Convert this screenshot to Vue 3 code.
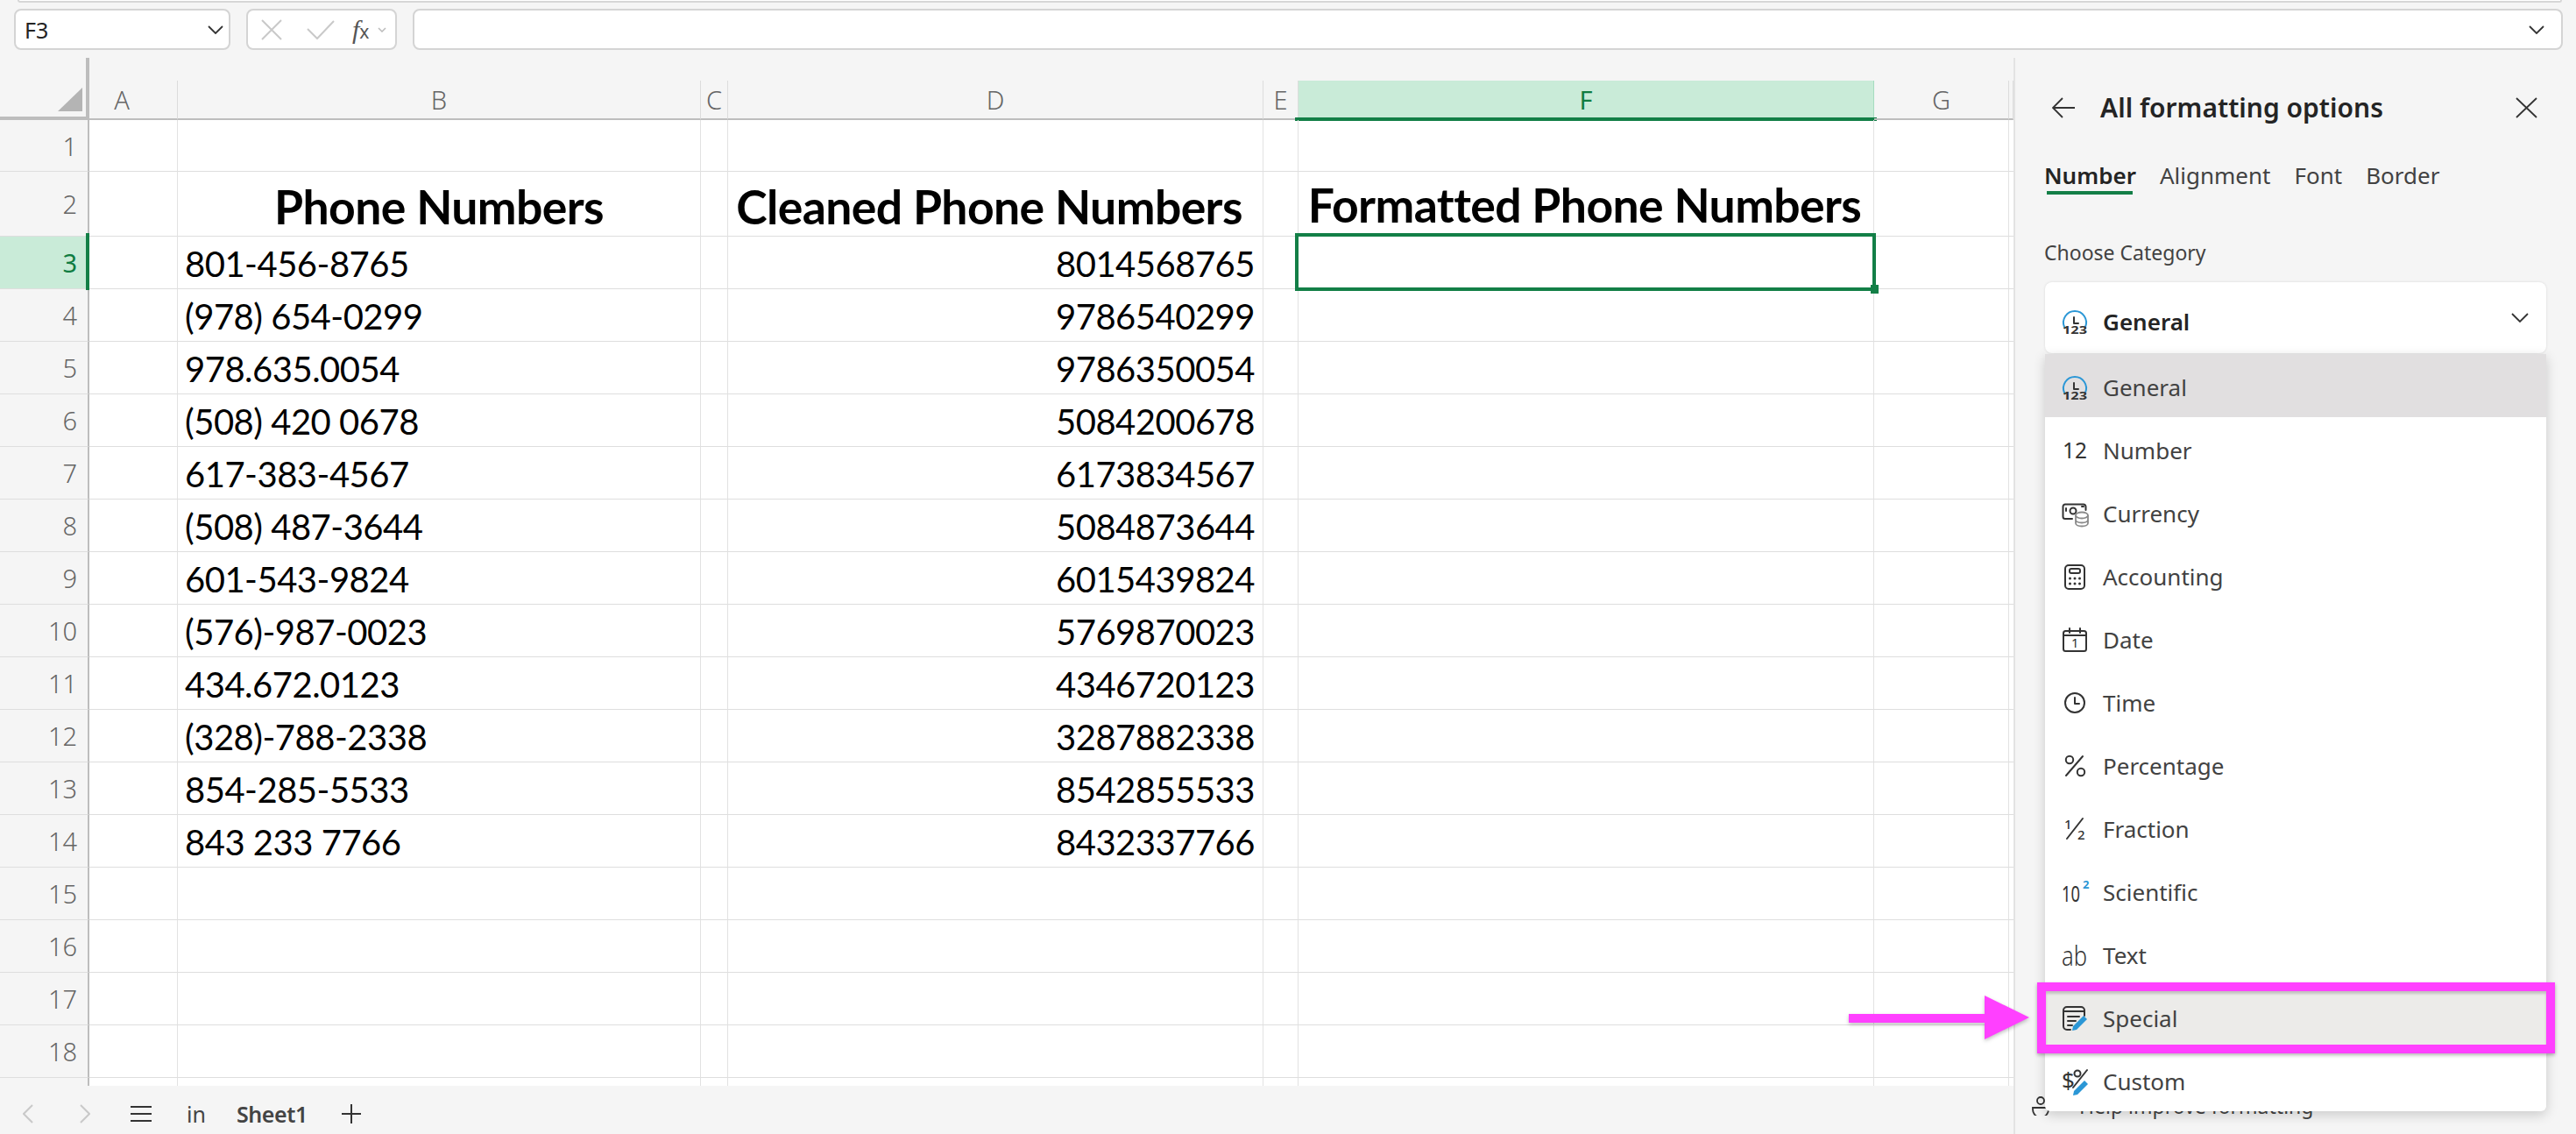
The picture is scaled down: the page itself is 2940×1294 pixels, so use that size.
<script setup>
const columns = [
  { id: 'A', cls: 'col-a' }, { id: 'B' }, { id: 'C' }, { id: 'D' }, { id: 'E' },
  { id: 'F', cls: 'col-sel' }, { id: 'G' }, { id: 'H', label: '' }
]
const dataCols = ['A', 'B', 'C', 'D', 'E', 'F', 'G', 'H']
const phones = [
  ['801-456-8765', '8014568765'], ['(978) 654-0299', '9786540299'], ['978.635.0054', '9786350054'],
  ['(508) 420 0678', '5084200678'], ['617-383-4567', '6173834567'], ['(508) 487-3644', '5084873644'],
  ['601-543-9824', '6015439824'], ['(576)-987-0023', '5769870023'], ['434.672.0123', '4346720123'],
  ['(328)-788-2338', '3287882338'], ['854-285-5533', '8542855533'], ['843 233 7766', '8432337766']
]
const rowNums = Array.from({ length: 19 }, (_, i) => i + 1)
function cellText(r, c) {
  if (r === 2) {
    if (c === 'B') return 'Phone Numbers'
    if (c === 'D') return 'Cleaned Phone Numbers'
    if (c === 'F') return 'Formatted Phone Numbers'
    return ''
  }
  const p = phones[r - 3]
  if (!p) return ''
  if (c === 'B') return p[0]
  if (c === 'D') return p[1]
  return ''
}
function cellClass(r, c) {
  return {
    head: r === 2 && cellText(r, c),
    'head-d': r === 2 && c === 'D',
    'head-f': r === 2 && c === 'F',
    right: r > 2 && c === 'D',
    selected: r === 3 && c === 'F'
  }
}
const tabs = ['Number', 'Alignment', 'Font', 'Border']
const items = ['General', 'Number', 'Currency', 'Accounting', 'Date', 'Time', 'Percentage', 'Fraction', 'Scientific', 'Text', 'Special', 'Custom']
</script>

<template>
  <div class="app">
    <div class="top-strip"></div>
    <div class="formula-bar">
      <div class="box name-box">
        <span>F3</span>
        <svg class="name-chev" width="18" height="10" viewBox="0 0 18 10"><path d="M1 1l8 8 8-8" /></svg>
      </div>
      <div class="box fx-box">
        <svg width="24" height="24" viewBox="0 0 24 24" class="fx-x"><path d="M1 1l22 22M23 1L1 23" /></svg>
        <svg width="32" height="22" viewBox="0 0 32 22" class="fx-check"><path d="M1 10l11 11L31 1" /></svg>
        <span class="fx-text"><i>f</i><i class="x">x</i></span>
        <svg width="10" height="6" viewBox="0 0 10 6" class="fx-chev"><path d="M1 1l4 4 4-4" /></svg>
      </div>
      <div class="box formula-input">
        <svg width="18" height="10" viewBox="0 0 18 10" class="name-chev"><path d="M1 1l8 8 8-8" /></svg>
      </div>
    </div>

    <div class="main">
      <section class="sheet">
        <div class="grid">
          <div class="corner"><span class="tri"></span></div>
          <div v-for="c in columns" :key="c.id" class="col-cell">
            <div class="col-inner" :class="c.cls">{{ c.label === '' ? '' : c.id }}<span v-if="c.id === 'F'" class="col-bar"></span></div>
          </div>
          <template v-for="r in rowNums" :key="r">
            <div class="row-head" :class="{ 'row-sel': r === 3 }">{{ r < 19 ? r : '' }}<span v-if="r === 3" class="row-bar"></span></div>
            <div v-for="c in dataCols" :key="c" class="cell" :class="cellClass(r, c)">
              {{ cellText(r, c) }}
              <span v-if="r === 3 && c === 'F'" class="sel-box"><span class="sel-handle"></span></span>
            </div>
          </template>
        </div>
        <div class="tabbar">
          <svg class="nav-l" width="12" height="22" viewBox="0 0 12 22"><path d="M11 1L1 11l10 10" /></svg>
          <svg class="nav-r" width="12" height="22" viewBox="0 0 12 22"><path d="M1 1l10 10L1 21" /></svg>
          <svg class="menu" width="24" height="20" viewBox="0 0 24 20"><path d="M0 2h24M0 10h24M0 18h24" /></svg>
          <span class="in">in</span>
          <span class="sheet-tab">Sheet1</span>
          <svg class="plus" width="22" height="22" viewBox="0 0 22 22"><path d="M11 0v22M0 11h22" /></svg>
        </div>
      </section>

      <aside class="panel">
        <header class="panel-head">
          <svg width="26" height="24" viewBox="0 0 26 24" class="line-icon"><path d="M26 12H1M12 1L1 12l11 11" /></svg>
          <h2>All formatting options</h2>
          <svg width="25" height="24" viewBox="0 0 25 24" class="line-icon close"><path d="M1 1l23 22M24 1L1 23" /></svg>
        </header>
        <nav class="tabs">
          <span v-for="(t, i) in tabs" :key="t" class="tab" :class="{ active: i === 0 }">{{ t }}</span>
        </nav>
        <div class="choose">Choose Category</div>
        <div class="select-wrap">
          <div class="select">
            <svg class="ico" width="32" height="32" viewBox="0 0 32 32">
              <path class="blue-line" d="M4 22A13 13 0 1 1 28 22" />
              <path class="thin" d="M15 11v7h5" />
              <text class="t123" x="2" y="30" textLength="28" lengthAdjust="spacingAndGlyphs">123</text>
            </svg>
            <span class="select-text">General</span>
            <svg class="select-chev" width="20" height="11" viewBox="0 0 20 11"><path d="M1 1l9 9 9-9" /></svg>
          </div>
          <ul class="dropdown">
            <li v-for="it in items" :key="it" class="item" :class="'item-' + it.toLowerCase()">
              <svg class="ico" width="32" height="32" viewBox="0 0 32 32">
                <template v-if="it === 'General'">
                  <path class="blue-line" d="M4 22A13 13 0 1 1 28 22" />
                  <path class="thin" d="M15 11v7h5" />
                  <text class="t123" x="2" y="30" textLength="28" lengthAdjust="spacingAndGlyphs">123</text>
                </template>
                <template v-else-if="it === 'Number'">
                  <text class="tnum" x="2" y="25" textLength="28" lengthAdjust="spacingAndGlyphs">12</text>
                </template>
                <template v-else-if="it === 'Currency'">
                  <path class="thin" d="M13 22H5a2.500 2.500 0 0 1-2.500-2.500V8A2.500 2.500 0 0 1 5 5.500h21a2.500 2.500 0 0 1 2.500 2.500v4" />
                  <circle class="thin" cx="14" cy="13" r="3.500" />
                  <path class="thin" d="M6 10v3M24 8h2" />
                  <g class="coin"><ellipse cx="24" cy="18" rx="7" ry="3.500" /><path d="M17 18v9c0 2 3 3.500 7 3.500s7-1.500 7-3.500v-9M17 23c0 2 3 3.500 7 3.500s7-1.500 7-3.500" /></g>
                </template>
                <template v-else-if="it === 'Accounting'">
                  <rect class="thin" x="5" y="3" width="22" height="27" rx="4" />
                  <rect class="thin" x="10" y="7" width="12" height="5" rx="2" />
                  <g class="dots"><circle cx="10.500" cy="18" r="1.500" /><circle cx="16" cy="18" r="1.500" /><circle cx="21.500" cy="18" r="1.500" /><circle cx="10.500" cy="24" r="1.500" /><circle cx="16" cy="24" r="1.500" /><circle cx="21.500" cy="24" r="1.500" /></g>
                </template>
                <template v-else-if="it === 'Date'">
                  <rect class="thin" x="3" y="6" width="26" height="23" rx="2.500" />
                  <path class="thin" d="M3 11h26M10 3v5M22 3v5" />
                  <text class="tsmall" x="12" y="25">1</text>
                </template>
                <template v-else-if="it === 'Time'">
                  <circle class="thin" cx="16" cy="16" r="11" />
                  <path class="thin" d="M16 10v7h5" />
                </template>
                <template v-else-if="it === 'Percentage'">
                  <circle class="thin" cx="10" cy="9" r="4.200" />
                  <circle class="thin" cx="23" cy="23" r="4.200" />
                  <path class="thin" d="M25 5L6 27" />
                </template>
                <template v-else-if="it === 'Fraction'">
                  <text class="tfrac" x="4" y="16">1</text>
                  <path class="thin" d="M25 4L7 27" />
                  <text class="tfrac" x="19" y="28">2</text>
                </template>
                <template v-else-if="it === 'Scientific'">
                  <text class="tten" x="1" y="27" textLength="21" lengthAdjust="spacingAndGlyphs">10</text>
                  <text class="tsup" x="25" y="12">2</text>
                </template>
                <template v-else-if="it === 'Text'">
                  <text class="tab-ic" x="1" y="28" textLength="29" lengthAdjust="spacingAndGlyphs">ab</text>
                </template>
                <template v-else-if="it === 'Special'">
                  <path class="thin" d="M11 29H7a4 4 0 0 1-4-4V7a4 4 0 0 1 4-4h16a4 4 0 0 1 4 4v6M3 8h24M8 14h13M8 19h9M8 24h5" />
                  <path class="pen" d="M26 13l4 4-12 12-5 1 1-5z" />
                </template>
                <template v-else>
                  <text class="tdollar" x="1" y="24">$</text>
                  <circle class="thin" cx="19" cy="7" r="3.500" />
                  <path class="thin" d="M30 3L14 23" />
                  <path class="pen" d="M27 15l4 4-12 12-5 1 1-5z" />
                </template>
              </svg>
              <span>{{ it }}</span>
              <template v-if="it === 'Special'">
                <span class="callout-box"></span>
                <svg class="callout-arrow" width="206" height="50" viewBox="0 0 206 50">
                  <polygon points="0,21 155,21 155,0 206,25 155,50 155,31 0,31" />
                </svg>
              </template>
            </li>
          </ul>
        </div>
        <footer class="help">
          <svg width="20" height="22" viewBox="0 0 20 22" class="help-ico"><circle cx="10" cy="5" r="4" /><path d="M1 13h18v2a7 7 0 0 1-18 0z" /></svg>
          <span>Help improve formatting</span>
        </footer>
      </aside>
    </div>
  </div>
</template>

<style>
html, body { margin: 0; padding: 0; background: #f5f5f5; }
</style>

<style scoped>
.app {
  width: 2940px; height: 1294px; overflow: hidden; background: #f5f5f5;
  display: flex; flex-direction: column;
  font-family: "Noto Sans", "Open Sans", sans-serif; color: #242424;
}
.top-strip {
  height: 3px; margin: 0 16px 0 20px; background: #fff; box-sizing: border-box;
  border: 2px solid #d6d6d6; border-top: 0; border-radius: 0 0 8px 8px;
}
.formula-bar { display: flex; gap: 18px; margin: 7px 15px 0 16px; height: 47px; }
.box {
  background: #fff; border: 2px solid #d4d4d4; border-radius: 8px; box-sizing: border-box;
  display: flex; align-items: center;
}
.name-box { width: 247px; padding: 0 6px 0 10px; justify-content: space-between; font-size: 25px; }
.name-chev { fill: none; stroke: #333; stroke-width: 1.800; }
.fx-box { width: 172px; padding-left: 15px; position: relative; }
.fx-x, .fx-check { fill: none; stroke: #c9c9c9; stroke-width: 2; }
.fx-check { margin-left: 28px; }
.fx-text { margin-left: 20px; font-family: "Liberation Serif", serif; font-size: 30px; color: #555; line-height: 1; }
.fx-text .x { font-size: 21px; font-family: "Noto Sans", sans-serif; font-style: normal; }
.fx-chev { fill: none; stroke: #bbb; stroke-width: 1.500; margin-left: 10px; }
.formula-input { flex: 1; justify-content: flex-end; padding-right: 19px; }

.main { flex: 1; display: flex; margin-top: 9px; min-height: 0; }
.sheet { width: 2298px; display: flex; flex-direction: column; }
.grid {
  height: 1173px; overflow: hidden; display: grid;
  grid-template-columns: 102px 101px 597px 31px 611px 40px 657px 154px 5px;
  grid-template-rows: 71px 59px 74px repeat(17, 60px);
  background: #fff;
}
.corner {
  background: #f5f5f5; box-sizing: border-box; position: relative;
  border-right: 4px solid #bdbdbd; border-bottom: 4px solid #bdbdbd;
}
.tri {
  position: absolute; right: 4px; bottom: 6px; width: 28px; height: 27px;
  background: #b4b4b4; clip-path: polygon(100% 0, 100% 100%, 0 100%);
}
.col-cell { background: #f5f5f5; display: flex; align-items: flex-end; }
.col-inner {
  width: 100%; height: 45px; box-sizing: border-box; position: relative;
  display: flex; align-items: center; justify-content: center;
  border-right: 1px solid #dcdcdc; border-bottom: 2px solid #bdbdbd;
  color: #666; font-size: 29px; font-weight: 300; 
}
.col-a { padding-right: 26px; }
.col-sel { background: #c9ebd8; color: #107c41; border-right-color: #a6dcc0; font-weight: 400; }
.col-bar { position: absolute; left: -4px; right: -4px; bottom: -3px; height: 4px; background: #137f47; }
.row-head {
  background: #f5f5f5; box-sizing: border-box; position: relative;
  display: flex; align-items: center; justify-content: flex-end; padding-right: 12px;
  border-right: 2px solid #bdbdbd; border-bottom: 1px solid #dedede;
  color: #666; font-size: 29px; font-weight: 300;
}
.row-sel { background: #c9ebd8; color: #107c41; font-weight: 400; }
.row-bar { position: absolute; right: -2px; top: -4px; bottom: -2px; width: 4px; background: #137f47; z-index: 2; }
.cell {
  box-sizing: border-box; border-right: 1px solid #e2e2e2; border-bottom: 1px solid #dedede;
  font-family: Lato, "Open Sans", sans-serif; font-size: 40px; color: #000; letter-spacing: -0.5px;
  display: flex; align-items: center; padding: 2px 5px 0 8px; white-space: nowrap; min-width: 0; position: relative;
}
.right { justify-content: flex-end; padding-right: 9px; }
.head { justify-content: center; font-weight: 700; font-size: 53.5px; padding: 5px 0 0; letter-spacing: -0.6px; }
.head-d { padding-right: 14px; }
.head-f { padding: 1px 3px 0 0; }
.selected { overflow: visible; }
.sel-box {
  position: absolute; left: -4px; top: -4px; right: -3px; bottom: -3px;
  border: 4px solid #137f47; z-index: 3;
}
.sel-handle { position: absolute; right: -7px; bottom: -7px; width: 9px; height: 10px; background: #137f47; border: 0 solid #fff; }

.tabbar { flex: 1; position: relative; display: flex; align-items: center; padding-top: 9px; color: #333; }
.tabbar svg { fill: none; flex: none; }
.nav-l { margin-left: 26px; stroke: #c9c9c9; stroke-width: 2; }
.nav-r { margin-left: 53px; stroke: #c9c9c9; stroke-width: 2; }
.menu { margin-left: 46px; stroke: #333; stroke-width: 2; }
.in { margin-left: 40px; font-size: 25px; color: #444; line-height: 1; }
.sheet-tab { margin-left: 35px; font-size: 25px; letter-spacing: -0.4px; font-weight: 600; color: #444; line-height: 1; }
.plus { margin-left: 39px; stroke: #333; stroke-width: 2; }

.panel {
  flex: 1; box-sizing: border-box; border-left: 2px solid #e3e3e3; padding-left: 33px;
  display: flex; flex-direction: column;
}
.panel-head { display: flex; align-items: center; margin-top: 40px; height: 34px; padding-left: 9px; }
.panel-head h2 { margin: 0 0 0 29px; font-size: 30px; font-weight: 600; line-height: 34px; color: #242424; }
.line-icon { fill: none; stroke: #333; stroke-width: 1.800; flex: none; }
.close { margin-left: auto; margin-right: 44px; }
.tabs { display: flex; gap: 27px; margin-top: 42px; }
.tab { position: relative; font-size: 26px; line-height: 36px; height: 40px; color: #424242; }
.tab.active { font-weight: 600; color: #242424; }
.tab.active::after { content: ""; position: absolute; left: 3px; right: 4px; top: 36px; height: 4px; background: #137f47; }
.choose { margin-top: 50px; font-size: 23px; line-height: 32px; color: #424242; }
.select-wrap { position: relative; margin: 18px 34px 0 1px; }
.select {
  height: 81px; background: #fff; border-radius: 8px; box-sizing: border-box; padding: 29px 20px 0 18px;
  display: flex; align-items: flex-start; position: relative; box-shadow: 0 0 3px rgba(0,0,0,.12);
}
.ico { flex: none; overflow: visible; }
.select-text { margin-left: 16px; font-size: 26px; font-weight: 600; line-height: 32px; }
.select-chev { margin-left: auto; margin-top: 6px; fill: none; stroke: #333; stroke-width: 1.800; }
.dropdown {
  position: absolute; left: 0; right: 0; top: 82px; margin: 0; padding: 0; list-style: none;
  background: #fff; box-shadow: 0 4px 14px rgba(0,0,0,.18); border-radius: 0 0 6px 6px; z-index: 5;
}
.item {
  height: 72px; box-sizing: border-box; display: flex; align-items: center; gap: 16px;
  padding: 4px 0 0 18px; font-size: 26px; color: #424242; position: relative;
}
.item-general { background: #e1dfe0; }
.item-special { background: #ecebe9; }
.callout-box {
  position: absolute; left: -9px; right: -10px; top: -3px; bottom: -6px;
  border: 10px solid #ff40ff; box-shadow: 0 2px 4px rgba(0,0,0,.3), inset 0 3px 3px rgba(0,0,0,.18); pointer-events: none;
}
.callout-arrow { position: absolute; left: -224px; top: 12px; fill: #ff40ff; filter: drop-shadow(0 2px 2px rgba(0,0,0,.25)); }
.thin { fill: none; stroke: #333; stroke-width: 2; stroke-linecap: round; stroke-linejoin: round; }
.blue-line { fill: none; stroke: #2b97d6; stroke-width: 2; stroke-linecap: round; }
.t123 { font: 700 13px "Noto Sans", sans-serif; fill: #333; }
.tnum { font: 400 25px "Noto Sans", sans-serif; fill: #333; }
.tsmall { font: 400 15px "Noto Sans", sans-serif; fill: #333; }
.tfrac { font: 500 15px "Noto Sans", sans-serif; fill: #333; }
.tten { font: 400 26px "Noto Sans", sans-serif; fill: #333; }
.tsup { font: 700 13px "Noto Sans", sans-serif; fill: #2b97d6; }
.tab-ic { font: 300 32px "Noto Sans", sans-serif; fill: #333; }
.tdollar { font: 400 26px "Noto Sans", sans-serif; fill: #333; }
.coin { fill: none; stroke: #8a8a8a; stroke-width: 1.800; }
.dots { fill: #333; }
.pen { fill: #2b97d6; }
.help { margin-top: auto; display: flex; align-items: center; gap: 34px; padding: 0 0 16px 0; font-size: 23px; line-height: 32px; color: #424242; margin-left: -14px; }
.help-ico { fill: none; stroke: #333; stroke-width: 1.800; flex: none; }
</style>
